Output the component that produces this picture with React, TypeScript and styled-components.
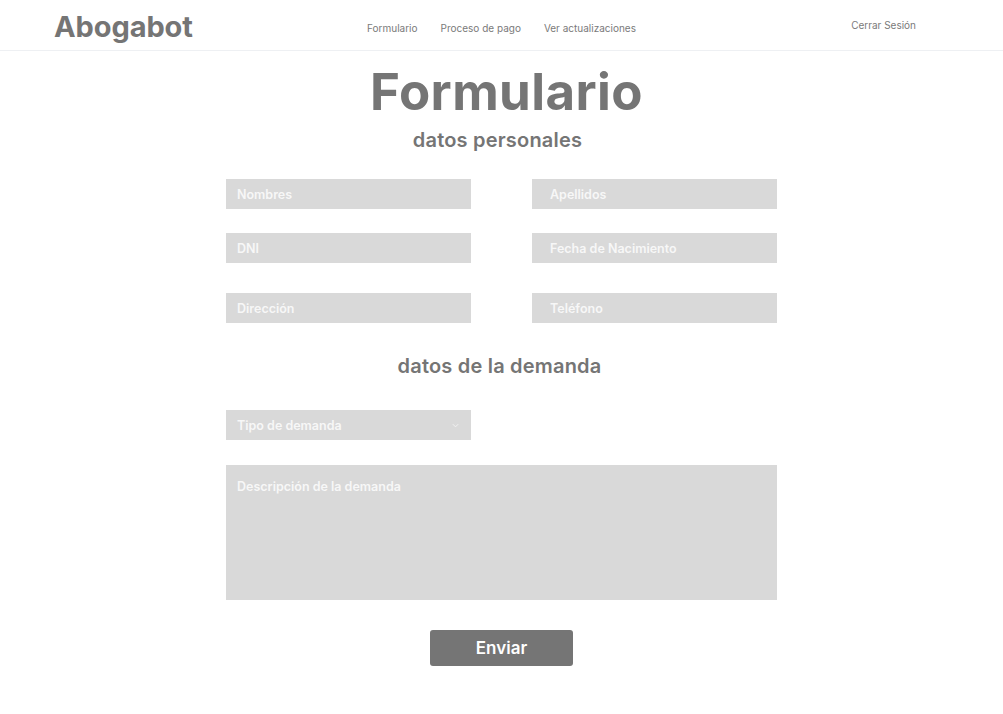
import React from "react";
import styled, { createGlobalStyle } from "styled-components";

const Global = createGlobalStyle`
  html, body { margin: 0; padding: 0; background: #ffffff; }
  body { font-family: "Inter", "Lato", sans-serif; color: #757575; }
  * { box-sizing: border-box; }
`;

const Header = styled.header`
  height: 51px;
  border-bottom: 1px solid #eef0f3;
  display: grid;
  grid-template-columns: 1fr auto 1fr;
  align-items: center;
  padding: 0 54px;
`;

const Logo = styled.div`
  font-size: 29px;
  font-weight: 700;
  color: #757575;
  letter-spacing: -0.1px;
  margin-top: 2px;
`;

const Nav = styled.nav`
  display: flex;
  gap: 23px;
  font-size: 10px;
  color: #7a7a7a;
  margin-top: 6px;
`;

const NavLink = styled.a`
  color: inherit;
  text-decoration: none;
`;

const Logout = styled.a`
  justify-self: end;
  margin-right: 33px;
  font-size: 10px;
  color: #7a7a7a;
  text-decoration: none;
  margin-top: -1px;
`;

const Main = styled.main`
  width: 551px;
  margin: 0 auto;
  display: flex;
  flex-direction: column;
  align-items: center;
`;

const Title = styled.h1`
  margin: 14px 0 0 10px;
  font-size: 51px;
  line-height: 54px;
  font-weight: 700;
  color: #757575;
  letter-spacing: 0.4px;
`;

const Subtitle = styled.h2<{ $mt: number; $shift: number }>`
  margin: ${(p) => p.$mt}px ${(p) => p.$shift}px 0 0;
  font-size: 20px;
  line-height: 24px;
  font-weight: 600;
  color: #757575;
  letter-spacing: 0.2px;
`;

const Row = styled.div<{ $mt: number }>`
  width: 100%;
  display: grid;
  grid-template-columns: 245px 245px;
  justify-content: space-between;
  margin-top: ${(p) => p.$mt}px;
`;

const Field = styled.div<{ $h?: number; $top?: boolean; $pl?: number }>`
  height: ${(p) => p.$h ?? 30}px;
  background: #d9d9d9;
  display: flex;
  align-items: ${(p) => (p.$top ? "flex-start" : "center")};
  justify-content: space-between;
  padding: ${(p) => (p.$top ? "14px 11px" : `0 11px 0 ${p.$pl ?? 11}px`)};
  font-size: 12.5px;
  font-weight: 600;
  color: #f7f7f7;
`;

const Wide = styled(Field)`
  width: 100%;
  margin-top: 25px;
`;

const Chevron = styled.svg`
  width: 9px;
  height: 9px;
`;

const Button = styled.button`
  margin-top: 30px;
  width: 143px;
  height: 36px;
  border: none;
  border-radius: 3px;
  background: #757575;
  color: #ffffff;
  font-family: inherit;
  font-size: 17px;
  font-weight: 600;
`;

export default function App() {
  return (
    <>
      <Global />
      <Header>
        <Logo>Abogabot</Logo>
        <Nav>
          <NavLink>Formulario</NavLink>
          <NavLink>Proceso de pago</NavLink>
          <NavLink>Ver actualizaciones</NavLink>
        </Nav>
        <Logout>Cerrar Sesión</Logout>
      </Header>
      <Main>
        <Title>Formulario</Title>
        <Subtitle $mt={9} $shift={8}>datos personales</Subtitle>
        <Row $mt={27}>
          <Field>Nombres</Field>
          <Field $pl={18}>Apellidos</Field>
        </Row>
        <Row $mt={24}>
          <Field>DNI</Field>
          <Field $pl={18}>Fecha de Nacimiento</Field>
        </Row>
        <Row $mt={30}>
          <Field>Dirección</Field>
          <Field $pl={18}>Teléfono</Field>
        </Row>
        <Subtitle $mt={31} $shift={4}>datos de la demanda</Subtitle>
        <Row $mt={32}>
          <Field>
            Tipo de demanda
            <Chevron viewBox="0 0 10 10" fill="none" stroke="#f4f4f4" strokeWidth="1">
              <path d="M2 3.5 L5 6.5 L8 3.5" />
            </Chevron>
          </Field>
        </Row>
        <Wide $h={135} $top>Descripción de la demanda</Wide>
        <Button>Enviar</Button>
      </Main>
    </>
  );
}
